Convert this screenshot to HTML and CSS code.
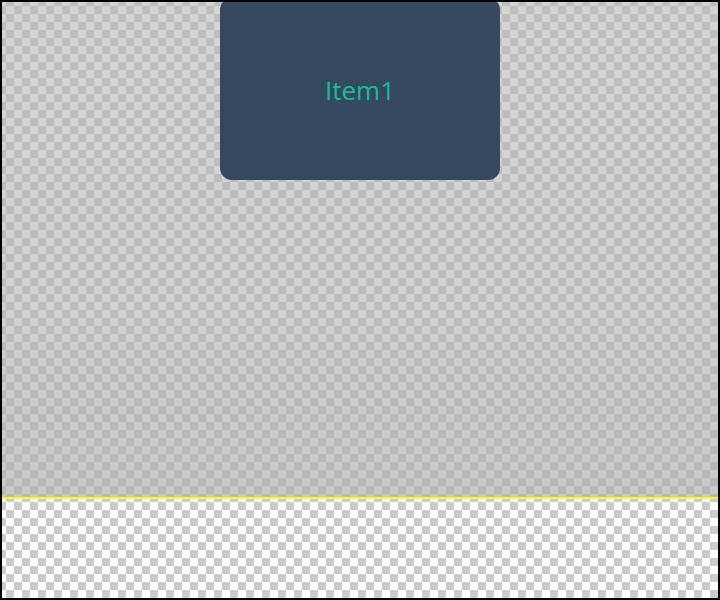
FILE: index.html
```html
<!DOCTYPE html>
<html>
<head>
<meta charset="utf-8">
<link rel="stylesheet" href="styles.css">
</head>
<body>
<div class="frame">
  <div class="stage">
    <div class="card"><span class="label">Item1</span></div>
  </div>
  <div class="divider"></div>
  <div class="floor"></div>
</div>
</body>
</html>
```
FILE: styles.css
```css
html, body {
  margin: 0;
  padding: 0;
}
body {
  width: 720px;
  height: 600px;
  overflow: hidden;
}
.frame {
  box-sizing: border-box;
  width: 720px;
  height: 600px;
  padding: 2px;
  outline: 2px solid #000;
  outline-offset: -2px;
  display: flex;
  flex-direction: column;
  background: repeating-conic-gradient(#cccccc 0 25%, #ffffff 0 50%) 6px 6px / 16px 16px;
}
.stage {
  height: 495px;
  display: flex;
  flex-direction: column;
  align-items: center;
  background: linear-gradient(to bottom, rgba(178,178,178,0.55) 0%, rgba(176,176,176,0.58) 60%, rgba(172,172,172,0.66) 100%);
}
.card {
  width: 280px;
  height: 182px;
  margin-top: -4px;
  background: #34495e;
  border-radius: 12px;
  display: flex;
  align-items: center;
  justify-content: center;
}
.label {
  font-family: "Open Sans", "Noto Sans", sans-serif;
  font-size: 26px;
  color: #1abc9c;
  margin-top: 2px;
}
.divider {
  height: 2px;
  background: #ffff00;
}
.floor {
  flex: 1;
}
```
